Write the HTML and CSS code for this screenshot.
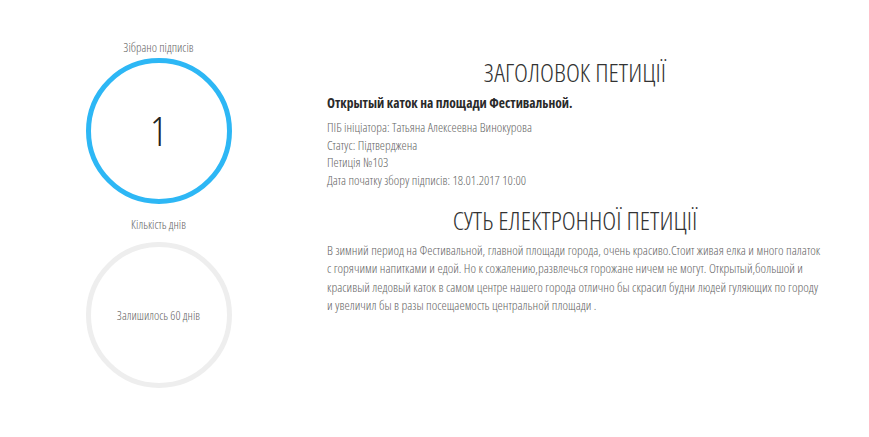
FILE: index.html
```html
<!DOCTYPE html>
<html lang="uk">
<head>
<meta charset="utf-8">
<title>Петиція</title>
<link rel="stylesheet" href="styles.css">
</head>
<body>
<div class="page">
  <aside class="stats">
    <div class="stat-label">Зібрано підписів</div>
    <div class="ring ring-blue"><span class="count">1</span></div>
    <div class="stat-label stat-label-2">Кількість днів</div>
    <div class="ring ring-gray"><span class="days">Залишилось 60 днів</span></div>
  </aside>
  <main class="content">
    <h1 class="heading">ЗАГОЛОВОК ПЕТИЦІЇ</h1>
    <p class="subject">Открытый каток на площади Фестивальной.</p>
    <div class="meta">
      <div>ПІБ ініціатора: Татьяна Алексеевна Винокурова</div>
      <div>Статус: Підтверджена</div>
      <div>Петиція №103</div>
      <div>Дата початку збору підписів: 18.01.2017 10:00</div>
    </div>
    <h2 class="heading heading-2">СУТЬ ЕЛЕКТРОННОЇ ПЕТИЦІЇ</h2>
    <p class="body-text">В зимний период на Фестивальной, главной площади города, очень красиво.Стоит живая елка и много палаток с горячими напитками и едой. Но к сожалению,развлечься горожане ничем не могут. Открытый,большой и красивый ледовый каток в самом центре нашего города отлично бы скрасил будни людей гуляющих по городу и увеличил бы в разы посещаемость центральной площади .</p>
  </main>
</div>
</body>
</html>
```
FILE: styles.css
```css
html, body {
  margin: 0;
  padding: 0;
  background: #ffffff;
}
body {
  font-family: "Open Sans", "Liberation Sans", sans-serif;
  font-stretch: condensed;
  font-weight: 300;
  color: #555;
}
.page {
  display: flex;
  width: 869px;
  padding-top: 40px;
}
.stats {
  width: 317px;
  display: flex;
  flex-direction: column;
  align-items: center;
}
.stat-label {
  font-size: 12.5px;
  line-height: 16px;
  color: #666;
  margin-bottom: 2px;
}
.stat-label-2 {
  margin-top: 13px;
  margin-bottom: 9px;
}
.ring {
  box-sizing: border-box;
  width: 146px;
  height: 146px;
  border-radius: 50%;
  display: flex;
  align-items: center;
  justify-content: center;
}
.ring-blue {
  border: 5px solid #2db7f5;
}
.ring-gray {
  border: 5px solid #eeeeee;
}
.count {
  font-size: 40px;
  font-weight: 300;
  color: #222;
  line-height: 1;
}
.days {
  font-size: 12.5px;
  color: #666;
}
.content {
  width: 500px;
  margin-left: 10px;
}
.heading {
  margin: 0;
  text-align: center;
  font-size: 26.5px;
  line-height: 34px;
  font-weight: 300;
  color: #333;
  margin-top: 15px;
  padding-right: 4px;
}
.heading-2 {
  margin-top: 14px;
}
.subject {
  margin: 5px 0 7px;
  font-size: 13.5px;
  font-weight: 700;
  color: #2a2a2a;
  line-height: 18px;
}
.meta {
  font-size: 13px;
  line-height: 17.5px;
  color: #666;
}
.body-text {
  margin: 4px 0 0;
  max-width: 495px;
  font-size: 13.2px;
  line-height: 18.3px;
  color: #666;
}
```
